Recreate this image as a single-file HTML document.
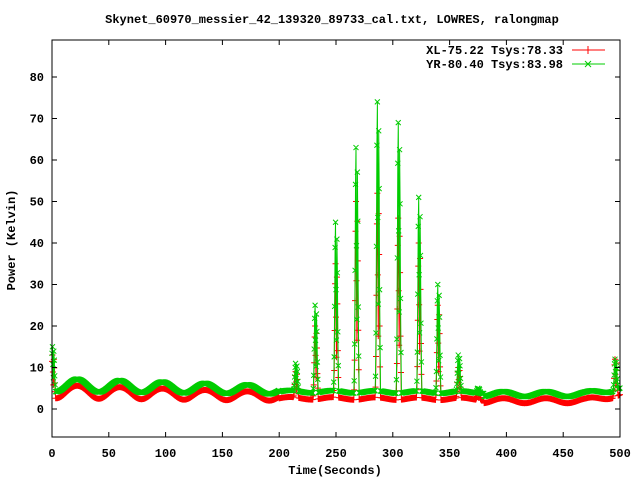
<!DOCTYPE html>
<html><head><style>
body{margin:0;background:#fff;width:640px;height:480px;overflow:hidden}
svg text{font-family:"Liberation Mono",monospace;font-weight:bold;font-size:12px;fill:#000}
</style></head><body>
<svg id="s" width="640" height="480" xmlns="http://www.w3.org/2000/svg">
<rect width="640" height="480" fill="#fff"/>
<g id="data"></g>
<rect x="52" y="40" width="568" height="397" fill="none" stroke="#000" stroke-width="1"/>
<g id="ticks" stroke="#000"></g>
<text x="332" y="23" text-anchor="middle">Skynet_60970_messier_42_139320_89733_cal.txt, LOWRES, ralongmap</text>
<text x="335" y="474" text-anchor="middle">Time(Seconds)</text>
<text transform="translate(15,240) rotate(-90)" text-anchor="middle">Power (Kelvin)</text>
<text x="563" y="54" text-anchor="end">XL-75.22 Tsys:78.33</text>
<text x="563" y="68" text-anchor="end">YR-80.40 Tsys:83.98</text>
<line x1="572" y1="50" x2="605" y2="50" stroke="#f00"/><line x1="588" y1="46" x2="588" y2="54" stroke="#f00"/>
<line x1="572" y1="64" x2="605" y2="64" stroke="#0c0"/><path d="M585 61l6 6M591 61l-6 6" stroke="#0c0"/>
</svg>
<script>
var X=t=>52+t*1.136,Y=v=>409-v*4.15,ns="http://www.w3.org/2000/svg";
var g=document.getElementById('data'),tk=document.getElementById('ticks'),s=document.getElementById('s');
function el(n,a,p){var e=document.createElementNS(ns,n);for(var k in a)e.setAttribute(k,a[k]);(p||g).appendChild(e);return e}
for(var v=0;v<=80;v+=10){var y=Y(v);el('line',{x1:52,y1:y,x2:57,y2:y},tk);el('line',{x1:615,y1:y,x2:620,y2:y},tk);
var t=el('text',{x:44,y:y+4,'text-anchor':'end'},s);t.textContent=v;}
for(var u=0;u<=500;u+=50){var x=X(u);el('line',{x1:x,y1:437,x2:x,y2:432},tk);el('line',{x1:x,y1:40,x2:x,y2:45},tk);
var t=el('text',{x:x,y:457,'text-anchor':'middle'},s);t.textContent=u;}
function base(t){var a=t<200?1.6-t*0.003:(t<380?0.3:0.6);var c=t<200?4.2-t*0.006:(t<380?2.6-(t-200)*0.001:2.0);
if(t>470)c+=(t-470)*0.05;return c+a*Math.sin((t-13)/37.5*2*Math.PI);}
var sp=[[1,15,13],[215,11,9],[232,25,20],[250,45,35],[268,63,50],[287,74,52],[305,69,46],[323,51,40],[340,30,25],[358,13,10],[375,5,4],[496,12,12]];
var pat=[0.05,0.2,0.5,0.85,1,0.6,0.3,0.9,0.7,0.35,0.15,0.05];
function val(t,i){var b=base(t)+(i?1.6:0);for(var k=0;k<sp.length;k++){var d=t-sp[k][0]+2.2;if(d>=0&&d<4.4){var f=pat[Math.floor(d/0.4)]||0;b+=(sp[k][i?1:2]-b)*f;}}return b;}
[[0,'#f00'],[1,'#0c0']].forEach(function(c){var i=c[0],pts=[],m='';
for(var t=0;t<=500;t+=0.4){var x=X(t),y=Y(val(t,i));pts.push(x.toFixed(1)+','+y.toFixed(1));
if(i)m+='M'+(x-2.5)+' '+(y-2.5)+'l5 5m0 -5l-5 5';else m+='M'+(x-3)+' '+y+'h6M'+x+' '+(y-3)+'v6';}
el('path',{d:m,stroke:c[1],'stroke-width':1,fill:'none'});
el('polyline',{points:pts.join(' '),stroke:c[1],fill:'none','stroke-width':1});});
</script>
</body></html>
